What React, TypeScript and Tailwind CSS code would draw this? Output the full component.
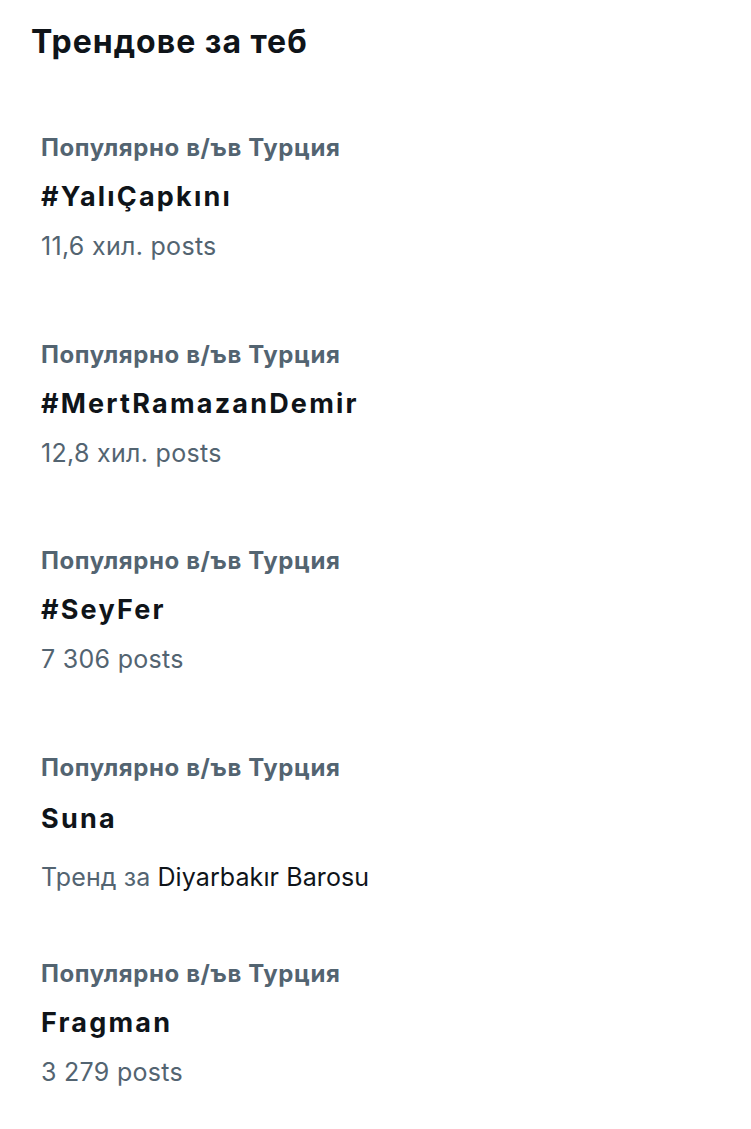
const trends = [
  { name: "#YalıÇapkını", posts: "11,6 хил. posts" },
  { name: "#MertRamazanDemir", posts: "12,8 хил. posts" },
  { name: "#SeyFer", posts: "7 306 posts" },
  { name: "Suna", trendFor: "Diyarbakır Barosu" },
  { name: "Fragman", posts: "3 279 posts" },
];

export default function App() {
  return (
    <div className="min-h-[1129px] w-[751px] bg-white font-['Inter',sans-serif]">
      <h2 className="pl-[31px] pt-[18px] text-[32px] font-bold leading-[48px] tracking-[1px] text-[#0f1419]">
        Трендове за теб
      </h2>
      <div className="mt-[58px] flex flex-col">
        {trends.map((t) => (
          <div key={t.name} className="flex h-[206.5px] flex-col pl-[41px]">
            <p className="text-[24px] font-bold leading-[48px] tracking-[0.6px] text-[#536471]">
              Популярно в/ъв Турция
            </p>
            {t.trendFor ? (
              <>
                <p className="mt-[3px] text-[27px] font-bold leading-[48px] tracking-[2.2px] text-[#0f1419]">
                  {t.name}
                </p>
                <p className="mt-[10px] text-[25px] leading-[48px] tracking-[0.1px] text-[#536471]">
                  Тренд за <span className="text-[#0f1419]">{t.trendFor}</span>
                </p>
              </>
            ) : (
              <>
                <p className="mt-[1px] text-[27px] font-bold leading-[48px] tracking-[2.2px] text-[#0f1419]">
                  {t.name}
                </p>
                <p className="mt-[1px] text-[25px] leading-[48px] tracking-[0.3px] text-[#536471]">
                  {t.posts}
                </p>
              </>
            )}
          </div>
        ))}
      </div>
    </div>
  );
}
